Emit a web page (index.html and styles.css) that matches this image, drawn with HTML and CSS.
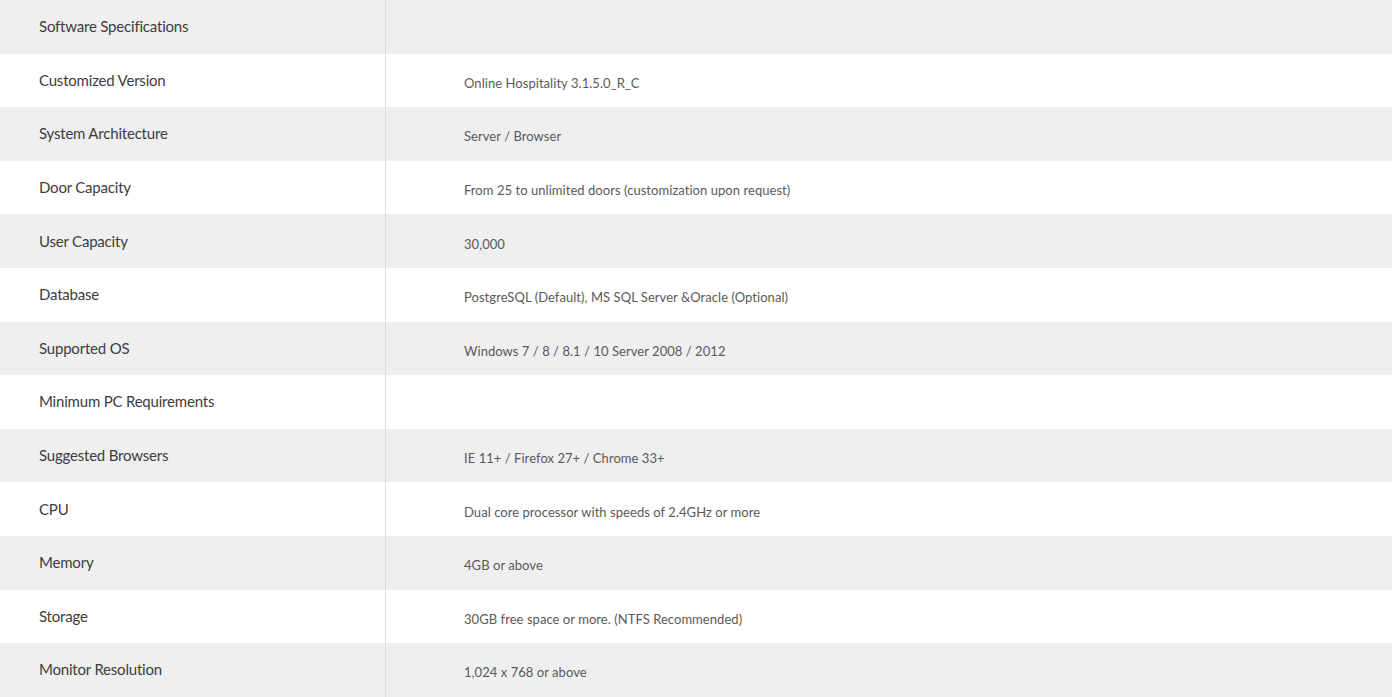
FILE: index.html
```html
<!DOCTYPE html>
<html>
<head>
<meta charset="utf-8">
<link rel="stylesheet" href="styles.css">
</head>
<body>
<div class="specs">
  <div class="row"><div class="label">Software Specifications</div><div class="value"></div></div>
  <div class="row"><div class="label">Customized Version</div><div class="value">Online Hospitality 3.1.5.0_R_C</div></div>
  <div class="row"><div class="label">System Architecture</div><div class="value">Server / Browser</div></div>
  <div class="row"><div class="label">Door Capacity</div><div class="value">From 25 to unlimited doors (customization upon request)</div></div>
  <div class="row"><div class="label">User Capacity</div><div class="value">30,000</div></div>
  <div class="row"><div class="label">Database</div><div class="value">PostgreSQL (Default), MS SQL Server &amp;Oracle (Optional)</div></div>
  <div class="row"><div class="label">Supported OS</div><div class="value">Windows 7 / 8 / 8.1 / 10 Server 2008 / 2012</div></div>
  <div class="row"><div class="label">Minimum PC Requirements</div><div class="value"></div></div>
  <div class="row"><div class="label">Suggested Browsers</div><div class="value">IE 11+ / Firefox 27+ / Chrome 33+</div></div>
  <div class="row"><div class="label">CPU</div><div class="value">Dual core processor with speeds of 2.4GHz or more</div></div>
  <div class="row"><div class="label">Memory</div><div class="value">4GB or above</div></div>
  <div class="row"><div class="label">Storage</div><div class="value">30GB free space or more. (NTFS Recommended)</div></div>
  <div class="row"><div class="label">Monitor Resolution</div><div class="value">1,024 x 768 or above</div></div>
</div>
</body>
</html>
```

FILE: styles.css
```css
html, body {
  margin: 0;
  padding: 0;
  background: #ffffff;
}
body {
  font-family: Lato, "Open Sans", "Liberation Sans", sans-serif;
  overflow: hidden;
}
.specs {
  display: grid;
  grid-auto-rows: 53.6px;
}
.row {
  display: grid;
  grid-template-columns: 386px 1fr;
}
.row:nth-child(odd) {
  background: #efefef;
}
.label {
  border-right: 1px solid #dddddd;
  padding-left: 39px;
  display: flex;
  align-items: center;
  padding-bottom: 1px;
  font-size: 15px;
  color: #3d3d3d;
  letter-spacing: -0.2px;
}
.value {
  padding-left: 78px;
  display: flex;
  align-items: center;
  padding-top: 5px;
  font-size: 13px;
  color: #5a5a5a;
  letter-spacing: 0.05px;
}
```
